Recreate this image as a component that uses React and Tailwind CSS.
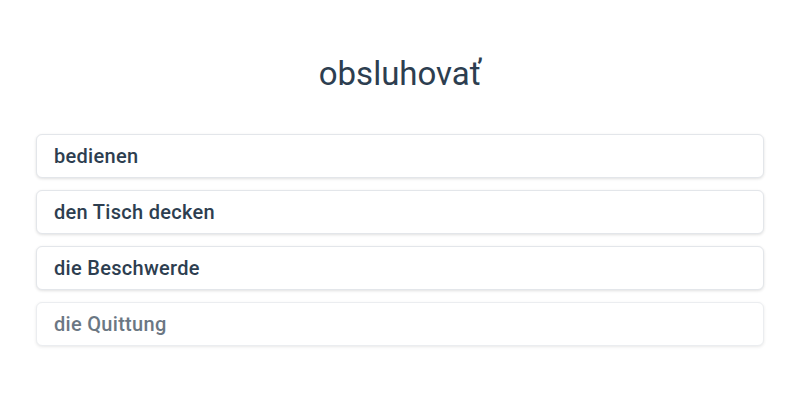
export default function App() {
  const options = ["bedienen", "den Tisch decken", "die Beschwerde", "die Quittung"];
  return (
    <div className="min-h-[400px] w-[800px] bg-white px-9 font-['Roboto',sans-serif] text-[#2d3e50]">
      <h1 className="pt-[54px] text-center text-[33px] leading-[40px] font-normal">obsluhovať</h1>
      <div className="mt-[40px] flex flex-col gap-3">
        {options.map((o, i) => (
          <div
            key={o}
            className={
              "flex h-[44px] items-center rounded-md border border-[#e3e6ea] bg-white px-[17px] text-[20px] tracking-[0.3px] font-medium shadow-[0_1px_3px_rgba(0,0,0,0.12)]" +
              (i === 3 ? " opacity-70" : "")
            }
          >
            {o}
          </div>
        ))}
      </div>
    </div>
  );
}
